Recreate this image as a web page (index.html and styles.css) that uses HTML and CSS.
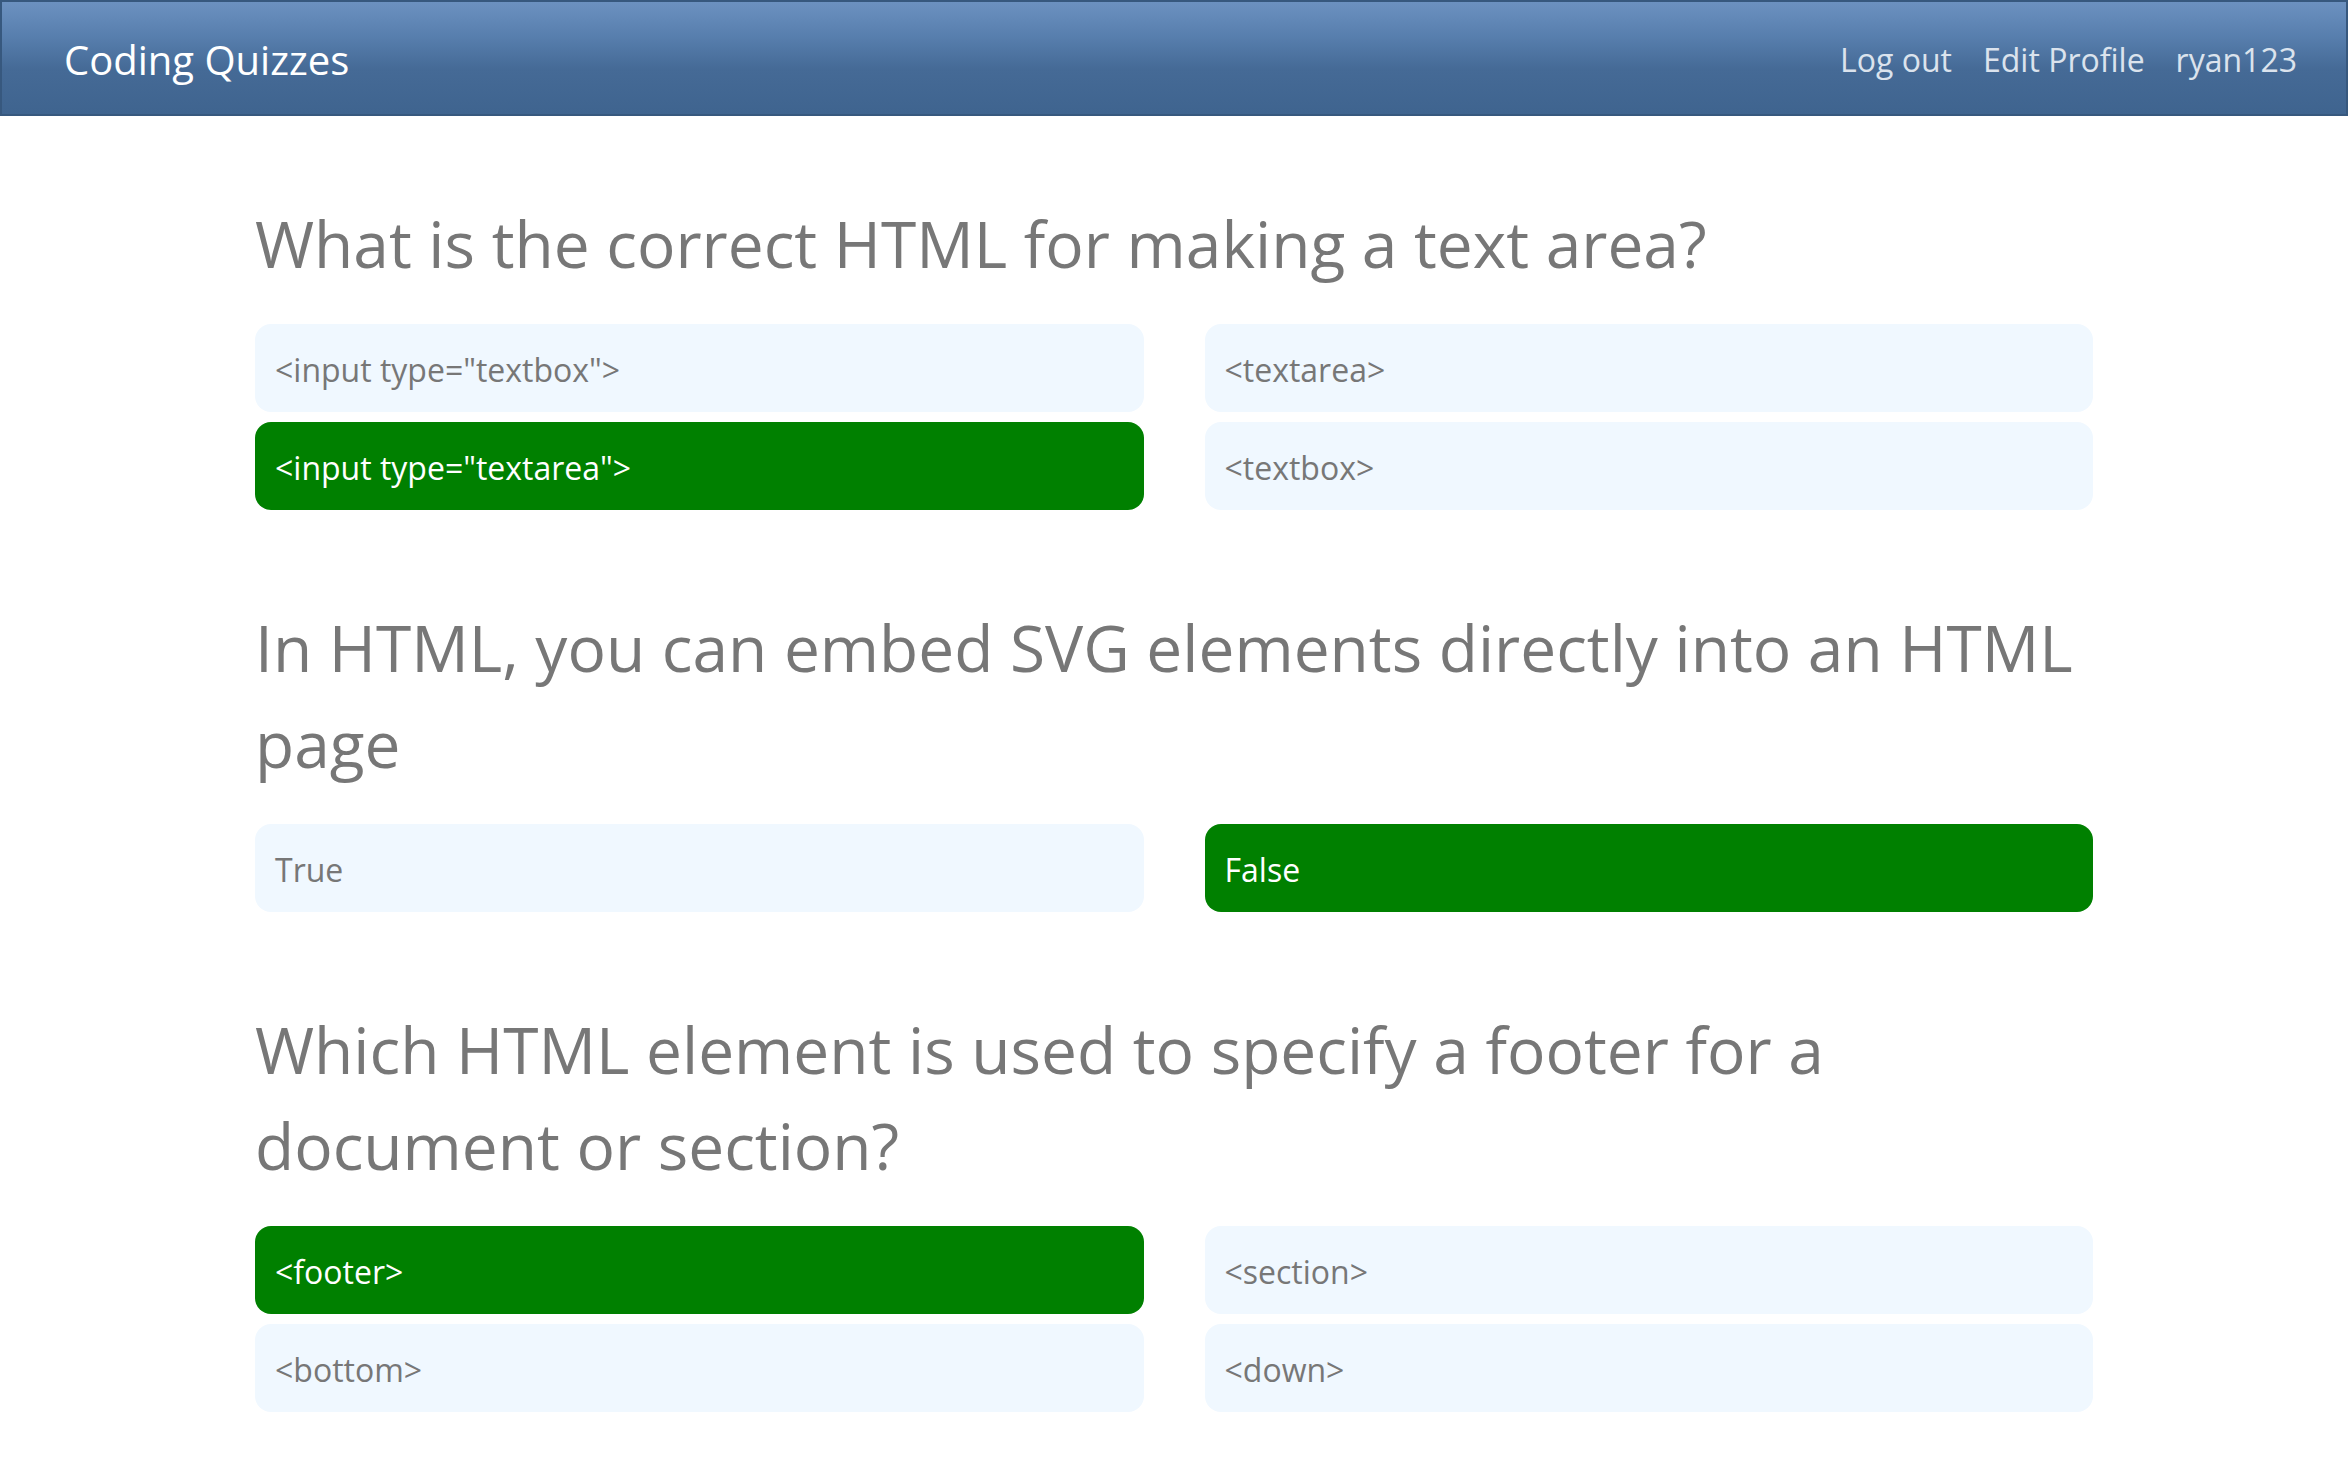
FILE: index.html
```html
<!DOCTYPE html>
<html lang="en">
<head>
<meta charset="utf-8">
<title>Coding Quizzes</title>
<link rel="stylesheet" href="styles.css">
</head>
<body>
<header class="navbar">
  <a class="brand" href="#">Coding Quizzes</a>
  <nav class="nav-links">
    <a href="#">Log out</a>
    <a href="#">Edit Profile</a>
    <a href="#">ryan123</a>
  </nav>
</header>
<main class="quiz">
  <section class="question">
    <h1 class="question-title">What is the correct HTML for making a text area?</h1>
    <div class="answers">
      <div class="answer">&lt;input type="textbox"&gt;</div>
      <div class="answer">&lt;textarea&gt;</div>
      <div class="answer correct">&lt;input type="textarea"&gt;</div>
      <div class="answer">&lt;textbox&gt;</div>
    </div>
  </section>
  <section class="question">
    <h1 class="question-title">In HTML, you can embed SVG elements directly into an HTML page</h1>
    <div class="answers">
      <div class="answer">True</div>
      <div class="answer correct">False</div>
    </div>
  </section>
  <section class="question">
    <h1 class="question-title">Which HTML element is used to specify a footer for a document or section?</h1>
    <div class="answers">
      <div class="answer correct">&lt;footer&gt;</div>
      <div class="answer">&lt;section&gt;</div>
      <div class="answer">&lt;bottom&gt;</div>
      <div class="answer">&lt;down&gt;</div>
    </div>
  </section>
</main>
</body>
</html>
```
FILE: styles.css
```css
* {
  box-sizing: border-box;
}

html, body {
  margin: 0;
  padding: 0;
  background: #ffffff;
}

body {
  font-family: "Open Sans", "Noto Sans", "Liberation Sans", sans-serif;
  color: #777777;
}

a {
  text-decoration: none;
}

.navbar {
  height: 116px;
  display: flex;
  align-items: center;
  justify-content: space-between;
  padding: 3px 49px 0 62px;
  background: linear-gradient(to bottom, #6c91c0 0%, #587fae 30%, #456a96 60%, #3f648f 100%);
  border: 2px solid #37587e;
}

.brand {
  color: #ffffff;
  font-size: 40px;
  line-height: 60px;
}

.nav-links {
  display: flex;
  gap: 31px;
}

.nav-links a {
  color: #dbe3ed;
  font-size: 32px;
  line-height: 48px;
}

.quiz {
  width: 1838px;
  margin: 0 auto;
  padding-top: 80px;
  display: flex;
  flex-direction: column;
  gap: 90px;
}

.question-title {
  margin: 0 0 32px 0;
  font-size: 64px;
  line-height: 96px;
  font-weight: 400;
  color: #777777;
}

.answers {
  display: grid;
  grid-template-columns: 1fr 1fr;
  column-gap: 61px;
  row-gap: 10px;
}

.answer {
  background: #f0f8ff;
  color: #777777;
  font-size: 32px;
  line-height: 48px;
  padding: 22px 20px 18px 20px;
  border-radius: 16px;
}

.answer.correct {
  background: #008000;
  color: #ffffff;
}
```
